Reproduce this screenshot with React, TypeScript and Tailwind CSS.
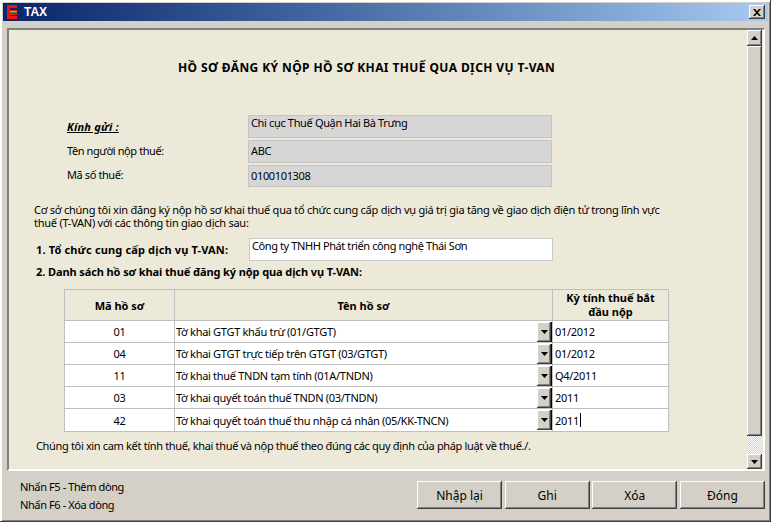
import React from 'react';

const RAISED =
  'bg-[#d4d0c8] shadow-[inset_-1px_-1px_0_#404040,inset_1px_1px_0_#ffffff,inset_-2px_-2px_0_#808080,inset_2px_2px_0_#d4d0c8]';

const ROWS = [
  { code: '01', name: 'Tờ khai GTGT khấu trừ (01/GTGT)', period: '01/2012' },
  { code: '04', name: 'Tờ khai GTGT trực tiếp trên GTGT (03/GTGT)', period: '01/2012' },
  { code: '11', name: 'Tờ khai thuế TNDN tạm tính (01A/TNDN)', period: 'Q4/2011' },
  { code: '03', name: 'Tờ khai quyết toán thuế TNDN (03/TNDN)', period: '2011' },
  { code: '42', name: 'Tờ khai quyết toán thuế thu nhập cá nhân (05/KK-TNCN)', period: '2011' },
];

const Arrow: React.FC<{ up?: boolean }> = ({ up }) => (
  <svg width="7" height="4" viewBox="0 0 7 4" className="block">
    <path d={up ? 'M3.5 0 7 4H0z' : 'M0 0h7L3.5 4z'} fill="#000" />
  </svg>
);

const ReadField: React.FC<{ label: React.ReactNode; value: string; className: string; labelClass: string; valueClass: string }> = ({
  label,
  value,
  className,
  labelClass,
  valueClass,
}) => (
  <div className={`flex ${className}`}>
    <div className={`w-[182px] pl-[1px] tracking-[-0.4px] ${labelClass}`}>{label}</div>
    <div className={`w-[304px] h-full bg-[#d6d6d6] border border-[#c4c4c4] pl-[2px] tracking-[-0.35px] ${valueClass}`}>{value}</div>
  </div>
);

const FootButton: React.FC<{ label: string }> = ({ label }) => (
  <button type="button" className={`w-[85px] h-[28px] flex items-center justify-center text-[12px] tracking-normal ${RAISED}`}>
    {label}
  </button>
);

export default function App() {
  return (
    <div
      className="w-[771px] h-[522px] overflow-hidden flex flex-col bg-[#d4d0c8] text-[11px] leading-[13px] tracking-[-0.3px] text-black p-[3px] shadow-[inset_-1px_-1px_0_#404040,inset_2px_2px_0_#ffffff,inset_-2px_-2px_0_#808080,inset_1px_1px_0_#d4d0c8]"
      style={{ fontFamily: '"Noto Sans", Tahoma, sans-serif' }}
    >
      {/* title bar */}
      <div className="h-[18px] shrink-0 flex items-center bg-gradient-to-r from-[#0a246a] to-[#a6caf0] pl-[4px] pr-[3px]">
        <svg width="10" height="14" viewBox="0 0 10 14" className="shrink-0">
          <rect width="10" height="14" fill="#ee1111" />
          <rect x="3" y="3" width="7" height="2" fill="#0a246a" />
          <rect x="3" y="6" width="7" height="1" fill="#e0a010" />
          <rect x="3" y="7" width="7" height="1" fill="#2e8b22" />
          <rect x="3" y="10" width="7" height="1" fill="#0a246a" />
        </svg>
        <span className="ml-[7px] font-bold text-[12px] tracking-normal text-white" style={{ fontFamily: '"Liberation Sans", sans-serif' }}>TAX</span>
        <div className={`ml-auto w-[16px] h-[14px] flex items-center justify-center ${RAISED}`}>
          <svg width="8" height="7" viewBox="0 0 8 7">
            <path d="M0 0h2l2 2.2L6 0h2L5 3.5 8 7H6L4 4.8 2 7H0l3-3.5z" fill="#000" />
          </svg>
        </div>
      </div>

      {/* panel */}
      <div className="h-[443px] mt-[7px] ml-[4px] mr-[3px] shrink-0 flex bg-[#ece9d8] border-2 border-t-[#808080] border-l-[#808080] border-b-[#ffffff] border-r-[#ffffff]">
        <div className="flex-1 min-w-0 pl-[25px]">
          <h1 className="mt-[30px] ml-[144px] text-[12px] leading-[16px] font-bold tracking-[0.4px] whitespace-nowrap">
            HỒ SƠ ĐĂNG KÝ NỘP HỒ SƠ KHAI THUẾ QUA DỊCH VỤ T-VAN
          </h1>

          <div className="ml-[32px] mt-[39px] flex flex-col">
            <ReadField
              className="h-[23px]"
              labelClass="pt-[5px]"
              valueClass="pt-0"
              label={<span className="font-bold italic underline tracking-[0.2px]">Kính gửi :</span>}
              value="Chi cục Thuế Quận Hai Bà Trưng"
            />
            <ReadField className="h-[23px] mt-[2px]" labelClass="pt-[4px]" valueClass="pt-[3px]" label="Tên người nộp thuế:" value="ABC" />
            <ReadField className="h-[22px] mt-[2px]" labelClass="pt-[3px]" valueClass="pt-[3px]" label="Mã số thuế:" value="0100101308" />
          </div>

          <p className="mt-[16px] w-[645px] tracking-[-0.25px]">
            Cơ sở chúng tôi xin đăng ký nộp hồ sơ khai thuế qua tổ chức cung cấp dịch vụ giá trị gia tăng về giao dịch điện tử trong lĩnh vực thuế (T-VAN) với các thông tin giao dịch sau:
          </p>

          <div className="mt-[9px] ml-[2px] flex items-center h-[23px]">
            <span className="w-[213px] font-bold tracking-[0.15px]">1. Tổ chức cung cấp dịch vụ T-VAN:</span>
            <div className="w-[304px] h-full bg-white border border-[#c8c8c8] pl-[2px] tracking-[-0.4px]">
              Công ty TNHH Phát triển công nghệ Thái Sơn
            </div>
          </div>
          <div className="mt-[4px] ml-[2px] font-bold tracking-[-0.1px]">2. Danh sách hồ sơ khai thuế đăng ký nộp qua dịch vụ T-VAN:</div>

          {/* table */}
          <div className="ml-[30px] mt-[11px] w-[605px] border border-[#c0c0c0]">
            <div className="flex h-[31px] font-bold tracking-normal text-center border-b border-[#c0c0c0]">
              <div className="w-[110px] border-r border-[#c0c0c0] flex items-center justify-center">Mã hồ sơ</div>
              <div className="w-[378px] border-r border-[#c0c0c0] flex items-center justify-center">Tên hồ sơ</div>
              <div className="flex-1 flex items-center justify-center leading-[14px]">Kỳ tính thuế bắt<br />đầu nộp</div>
            </div>
            {ROWS.map((row, i) => (
              <div key={row.code} className={`flex h-[22px] bg-white ${i < ROWS.length - 1 ? 'border-b border-[#c0c0c0]' : ''}`}>
                <div className="w-[110px] border-r border-[#c0c0c0] flex items-center justify-center">{row.code}</div>
                <div className="w-[378px] border-r border-[#c0c0c0] flex items-center justify-between pl-[1px]">
                  <span className="whitespace-nowrap">{row.name}</span>
                  <div className={`w-[15px] h-[20px] flex items-center justify-center border-r border-black ${RAISED}`}>
                    <Arrow />
                  </div>
                </div>
                <div className="flex-1 flex items-center pl-[2px]">
                  {row.period}
                  {i === ROWS.length - 1 ? <span className="inline-block w-px h-[14px] bg-black ml-px" /> : null}
                </div>
              </div>
            ))}
          </div>

          <p className="mt-[7px] ml-[2px] tracking-[-0.34px]">
            Chúng tôi xin cam kết tính thuế, khai thuế và nộp thuế theo đúng các quy định của pháp luật về thuế./.
          </p>
        </div>

        {/* scrollbar */}
        <div className="w-[15px] mr-[1px] flex flex-col shrink-0 bg-[repeating-conic-gradient(#ffffff_0_25%,#d4d0c8_0_50%)] bg-[length:2px_2px]">
          <div className={`h-[16px] flex items-center justify-center ${RAISED}`}><Arrow up /></div>
          <div className={`h-[390px] ${RAISED}`} />
          <div className="flex-1" />
          <div className={`h-[15px] flex items-center justify-center ${RAISED}`}><Arrow /></div>
        </div>
      </div>

      {/* footer */}
      <div className="flex-1 flex items-start pl-[17px] pr-[3px]">
        <div className="mt-[7px] leading-[18px] tracking-[-0.4px]">
          <div>Nhấn F5 - Thêm dòng</div>
          <div>Nhấn F6 - Xóa dòng</div>
        </div>
        <div className="ml-auto mt-[10px] flex gap-[2.67px]">
          <FootButton label="Nhập lại" />
          <FootButton label="Ghi" />
          <FootButton label="Xóa" />
          <FootButton label="Đóng" />
        </div>
      </div>
    </div>
  );
}
